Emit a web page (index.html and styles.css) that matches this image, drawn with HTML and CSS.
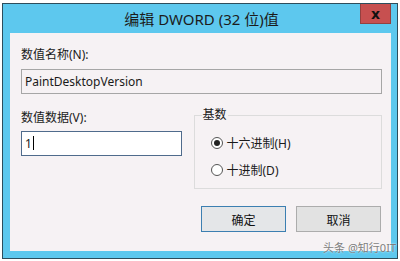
FILE: index.html
```html
<!DOCTYPE html>
<html lang="zh-CN">
<head>
    <meta charset="UTF-8">
    <title>编辑 DWORD (32 位)值</title>
    <link rel="stylesheet" href="styles.css">
</head>
<body>
    <div class="window">
        <div class="titlebar">
            <span class="title">编辑 DWORD (32 位)值</span>
            <button class="close-btn">x</button>
        </div>
        <div class="content">
            <div class="label">数值名称(N):</div>
            <div class="field field-name">PaintDesktopVersion</div>

            <div class="row">
                <div class="data-col">
                    <div class="label">数值数据(V):</div>
                    <div class="field field-data">1<span class="caret"></span></div>
                </div>
                <fieldset class="base-group">
                    <legend>基数</legend>
                    <label class="radio"><input type="radio" name="base" checked> 十六进制(H)</label>
                    <label class="radio"><input type="radio" name="base"> 十进制(D)</label>
                </fieldset>
            </div>

            <div class="actions">
                <button class="btn btn-default">确定</button>
                <button class="btn">取消</button>
            </div>
        </div>
        <div class="watermark">头条 @知行0IT</div>
    </div>
</body>
</html>
```

FILE: styles.css
```css
body {
    margin: 0;
    background: #fff;
    font-family: "Noto Sans", "Noto Sans CJK SC", sans-serif;
    font-size: 12px;
    color: #1a1a1a;
}
.window {
    position: relative;
    margin: 3px 1px 0 2px;
    width: 396px;
    border: 1px solid #2d4d5c;
    background: #5dc8ee;
    padding: 0 6px 7px 7px;
    box-sizing: border-box;
}
.titlebar {
    position: relative;
    height: 29px;
    display: flex;
    align-items: center;
    justify-content: center;
}
.title {
    font-size: 15px;
    color: #1c1c1c;
    padding-left: 2px;
}
.close-btn {
    position: absolute;
    top: 0;
    right: 0;
    width: 31px;
    height: 20px;
    padding: 0;
    background: #c75050;
    border: 1px solid #94403f;
    border-top: none;
    color: #111;
    font-family: "DejaVu Sans", sans-serif;
    font-size: 14px;
    font-weight: bold;
    line-height: 16px;
}
.content {
    height: 218px;
    background: #f6f2f4;
    padding: 14px 9px 0 11px;
    box-sizing: border-box;
}
.label {
    line-height: 16px;
    height: 16px;
}
.field {
    height: 25px;
    line-height: 23px;
    padding: 0 3px;
    box-sizing: border-box;
    border: 1px solid #a6a6a6;
}
.field-name {
    margin-top: 6px;
}
.row {
    display: flex;
    gap: 12px;
    margin-top: 14px;
}
.data-col {
    width: 161px;
}
.data-col .label {
    margin-top: 2px;
}
.field-data {
    margin-top: 5px;
    background: #fff;
    border-color: #4f6b8c;
}
.caret {
    display: inline-block;
    width: 1px;
    height: 14px;
    background: #000;
    vertical-align: -2px;
    margin-left: 1px;
}
.base-group {
    width: 189px;
    height: 81px;
    margin: 0;
    padding: 13px 0 0 16px;
    border: 1px solid #dcdcdc;
    box-sizing: border-box;
    display: flex;
    flex-direction: column;
    gap: 11px;
}
.base-group legend {
    margin-left: -9px;
    padding: 0 1px;
    line-height: 14px;
}
.radio {
    display: flex;
    align-items: center;
    gap: 4px;
    height: 16px;
}
.radio input {
    appearance: none;
    width: 12px;
    height: 12px;
    margin: 0;
    border: 1px solid #555;
    border-radius: 50%;
    background: #fff;
    display: grid;
    place-items: center;
}
.radio input:checked::after {
    content: "";
    width: 6px;
    height: 6px;
    border-radius: 50%;
    background: #222;
}
.actions {
    display: flex;
    justify-content: flex-end;
    gap: 10px;
    margin-top: 17px;
    padding-right: 1px;
}
.btn {
    width: 85px;
    height: 26px;
    background: #e2e2e2;
    border: 1px solid #acacac;
    font-family: "Noto Sans CJK SC", sans-serif;
    font-size: 12px;
    color: #111;
    padding: 0;
}
.btn-default {
    border-color: #3c7fb1;
    background: #e4e6e8;
}
.watermark {
    position: absolute;
    right: 1px;
    bottom: 3px;
    font-size: 11px;
    color: #7e7e7e;
    text-shadow: 0 0 2px #fff;
}
```
